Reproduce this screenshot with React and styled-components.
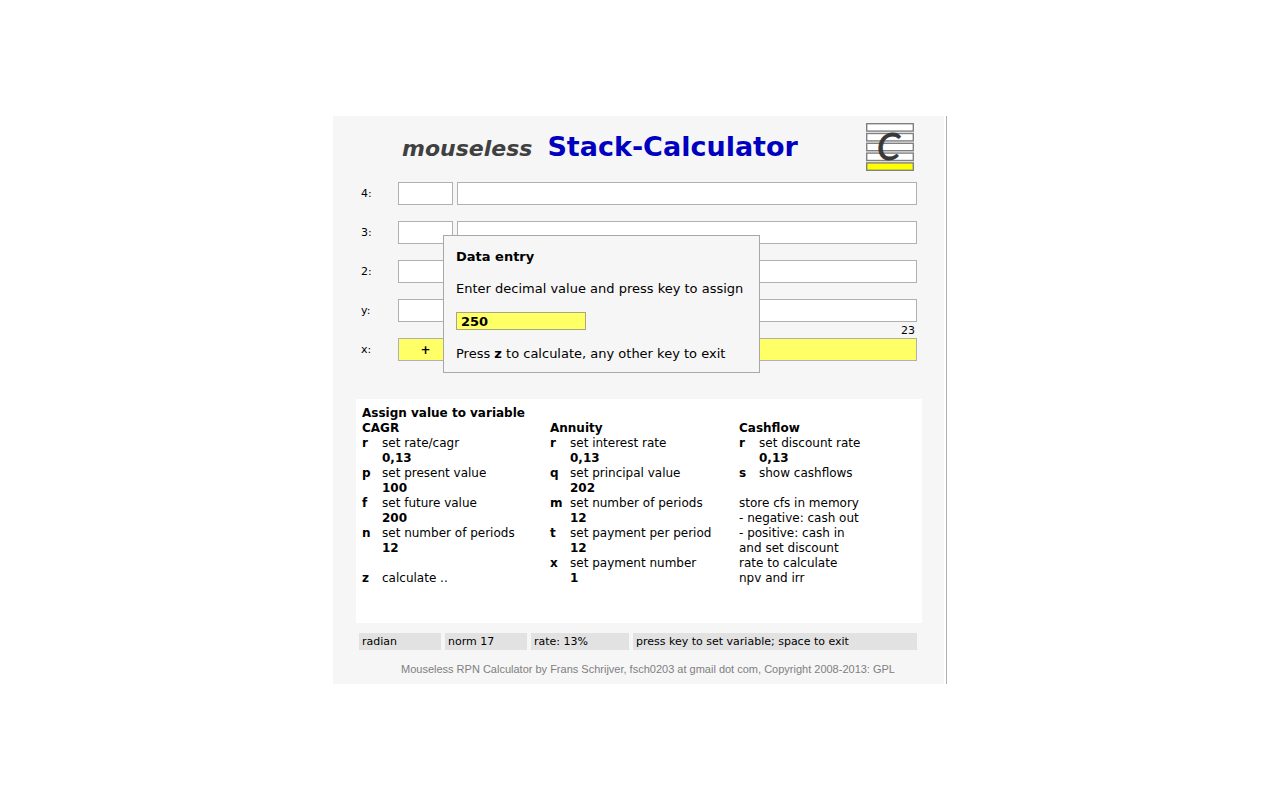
import { useState } from "react";
import styled, { createGlobalStyle } from "styled-components";

const GlobalStyle = createGlobalStyle`
  * {
    box-sizing: border-box;
  }
  body {
    margin: 0;
    background: #fff;
    color: #000;
    font-family: Verdana, "DejaVu Sans", sans-serif;
    font-size: 12px;
  }
`;

const Page = styled.main`
  display: flex;
  align-items: center;
  justify-content: center;
  min-height: 100vh;
`;

const Frame = styled.div`
  position: relative;
  width: 100%;
  max-width: 614px;
  padding-right: 2px;
  border-right: 1px solid #b0b0b0;
`;

const Calculator = styled.div`
  padding: 7px 22px 6px 23px;
  background: #f6f6f6;
`;

const Header = styled.header`
  display: flex;
  align-items: flex-start;
  justify-content: space-between;
  padding: 0 8px 0 46px;
`;

const Title = styled.h1`
  display: flex;
  align-items: baseline;
  gap: 15px;
  margin: 0;
  color: #0000c0;
  font-size: 27px;
  line-height: 48px;
`;

const Prefix = styled.em`
  color: #404040;
  font-size: 22px;
`;

const Stack = styled.div`
  padding: 9px 5px 0;
`;

const Row = styled.div`
  display: flex;
  align-items: center;
  gap: 4px;
`;

const RowLabel = styled.label`
  width: 33px;
  font-size: 11px;
`;

const Cell = styled.input`
  width: ${props => props.$small ? '55px' : 'auto'};
  flex: ${props => props.$small ? 'none' : '1'};
  min-width: 0;
  height: 23px;
  padding: 0 2px;
  border: 1px solid #b0b0b0;
  border-radius: 0;
  background: ${props => props.$active ? '#ffff66' : '#fff'};
  color: #000;
  font: bold 12px Verdana, "DejaVu Sans", sans-serif;
  text-align: ${props => props.$small ? 'center' : 'right'};
  outline: none;
`;

const Note = styled.div`
  height: 16px;
  padding-right: 2px;
  font-size: 11px;
  line-height: 18px;
  text-align: right;
`;

const Help = styled.section`
  min-height: 224px;
  margin-top: 38px;
  padding: 7px 6px;
  background: #fff;
  line-height: 15px;
`;

const HelpTitle = styled.h2`
  margin: 0;
  font-size: 12px;
`;

const Columns = styled.div`
  display: grid;
  grid-template-columns: 188fr 189fr 177fr;
`;

const ColumnTitle = styled.h3`
  margin: 0;
  font-size: 12px;
`;

const Item = styled.div`
  display: grid;
  grid-template-columns: 20px 1fr;
  margin-top: ${props => props.$spaced ? '15px' : '0'};
  white-space: nowrap;
`;

const Value = styled.b`
  grid-column: 2;
`;

const Remark = styled.p`
  margin: 15px 0 0;
  white-space: pre-line;
`;

const StatusBar = styled.div`
  display: flex;
  gap: 4px;
  margin-top: 10px;
  padding: 0 5px 0 3px;
`;

const Status = styled.div`
  flex: ${props => props.$width ? `0 1 ${props.$width}` : '1'};
  padding: 1px 3px 0;
  background: #e2e2e2;
  font-size: 11px;
  line-height: 16px;
  white-space: nowrap;
`;

const Footer = styled.footer`
  margin-top: 11px;
  padding-left: 18px;
  color: #808080;
  font-family: Arial, "Liberation Sans", sans-serif;
  font-size: 11px;
  line-height: 17px;
  text-align: center;
`;

const Dialog = styled.form`
  position: absolute;
  top: 119px;
  left: 110px;
  display: flex;
  flex-direction: column;
  align-items: flex-start;
  gap: 15px;
  width: 317px;
  padding: 12px 12px 10px;
  border: 1px solid #a8a8a8;
  background: #f6f6f6;
  font-size: 13px;
  line-height: 17px;
  white-space: nowrap;
`;

const Entry = styled.input`
  width: 130px;
  height: 18px;
  padding: 0 4px;
  border: 1px solid #a8a87c;
  border-radius: 0;
  background: #ffff66;
  color: #000;
  font: bold 13px Verdana, "DejaVu Sans", sans-serif;
  outline: none;
`;

const Logo = () => (
  <svg width="48" height="48" viewBox="0 0 48 48" role="img" aria-label="Stack-Calculator">
    {[0, 1, 2, 3, 4].map(i => (
      <rect
        key={i}
        x="0.7"
        y={i * 9.8 + 0.7}
        width="46.6"
        height="7.4"
        fill={i === 4 ? '#ffff00' : '#fff'}
        stroke="#808080"
        strokeWidth="1.4"
      />
    ))}
    <text x="11" y="37" fill="#383838" stroke="#383838" strokeWidth="0.8" fontSize="37" fontStyle="italic" fontFamily="Lato, sans-serif">C</text>
  </svg>
);

const rows = ['4', '3', '2', 'y', 'x'];

const columns = [
  {
    title: 'CAGR',
    items: [
      { key: 'r', text: 'set rate/cagr', value: '0,13' },
      { key: 'p', text: 'set present value', value: '100' },
      { key: 'f', text: 'set future value', value: '200' },
      { key: 'n', text: 'set number of periods', value: '12' },
      { key: 'z', text: 'calculate ..', spaced: true },
    ],
  },
  {
    title: 'Annuity',
    items: [
      { key: 'r', text: 'set interest rate', value: '0,13' },
      { key: 'q', text: 'set principal value', value: '202' },
      { key: 'm', text: 'set number of periods', value: '12' },
      { key: 't', text: 'set payment per period', value: '12' },
      { key: 'x', text: 'set payment number', value: '1' },
    ],
  },
  {
    title: 'Cashflow',
    items: [
      { key: 'r', text: 'set discount rate', value: '0,13' },
      { key: 's', text: 'show cashflows' },
    ],
    remark: 'store cfs in memory\n- negative: cash out\n- positive: cash in\nand set discount\nrate to calculate\nnpv and irr',
  },
];

const StackRow = ({ name }) => {
  const active = name === 'x';
  return (
    <Row>
      <RowLabel htmlFor={`stack-${name}`}>{name}:</RowLabel>
      <Cell $small $active={active} aria-label={`${name} operator`} value={active ? '+' : ''} readOnly />
      <Cell $active={active} id={`stack-${name}`} value="" readOnly />
    </Row>
  );
}

const App = () => {
  const [entry, setEntry] = useState('250');

  return (
    <Page>
      <GlobalStyle />
      <Frame>
        <Calculator>
          <Header>
            <Title><Prefix>mouseless</Prefix> Stack-Calculator</Title>
            <Logo />
          </Header>
          <Stack>
            {rows.map((name, i) => (
              <div key={name}>
                {i > 0 && <Note>{name === 'x' ? '23' : ''}</Note>}
                <StackRow name={name} />
              </div>
            ))}
          </Stack>
          <Help>
            <HelpTitle>Assign value to variable</HelpTitle>
            <Columns>
              {columns.map(({ title, items, remark }) => (
                <div key={title}>
                  <ColumnTitle>{title}</ColumnTitle>
                  {items.map(item => (
                    <Item key={item.key} $spaced={item.spaced}>
                      <b>{item.key}</b>
                      <span>{item.text}</span>
                      {item.value && <Value>{item.value}</Value>}
                    </Item>
                  ))}
                  {remark && <Remark>{remark}</Remark>}
                </div>
              ))}
            </Columns>
          </Help>
          <StatusBar>
            <Status $width="82px">radian</Status>
            <Status $width="82px">norm 17</Status>
            <Status $width="98px">rate: 13%</Status>
            <Status>press key to set variable; space to exit</Status>
          </StatusBar>
          <Footer>Mouseless RPN Calculator by Frans Schrijver, fsch0203 at gmail dot com, Copyright 2008-2013: GPL</Footer>
        </Calculator>
        <Dialog onSubmit={e => e.preventDefault()}>
          <b>Data entry</b>
          <label htmlFor="entry">Enter decimal value and press key to assign</label>
          <Entry id="entry" value={entry} onChange={e => setEntry(e.target.value)} />
          <span>Press <b>z</b> to calculate, any other key to exit</span>
        </Dialog>
      </Frame>
    </Page>
  );
}

export default App;
